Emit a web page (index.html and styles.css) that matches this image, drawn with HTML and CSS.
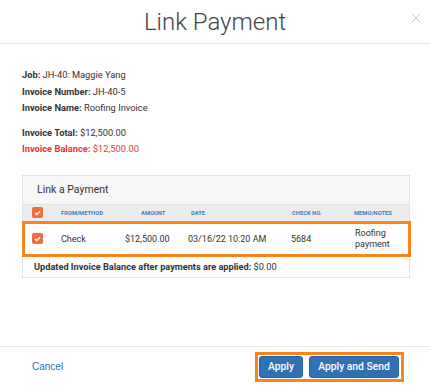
FILE: index.html
```html
<!DOCTYPE html>
<html>
<head>
<meta charset="utf-8">
<link rel="stylesheet" href="styles.css">
</head>
<body>
<div class="modal">
  <header class="modal-head">
    <span></span>
    <h1 class="title">Link Payment</h1>
    <span class="close">
      <svg width="10" height="10" viewBox="0 0 10 10"><path d="M0.5 0.5 L9.5 9.5 M9.5 0.5 L0.5 9.5" stroke="#c9c9c9" stroke-width="1" fill="none"/></svg>
    </span>
  </header>
  <main class="content">
    <div class="info">
      <p><b>Job:</b> JH-40: Maggie Yang</p>
      <p><b>Invoice Number:</b> JH-40-5</p>
      <p><b>Invoice Name:</b> Roofing Invoice</p>
    </div>
    <div class="info totals">
      <p><b>Invoice Total:</b> $12,500.00</p>
      <p class="red"><b>Invoice Balance:</b> $12,500.00</p>
    </div>
    <div class="table">
      <div class="table-title">Link a Payment</div>
      <div class="row col-head">
        <span class="cell cb-cell"><span class="cb"><svg width="7" height="6" viewBox="0 0 7 6"><path d="M1 3 L2.8 4.6 L6 1.2" stroke="#fff" stroke-width="1.4" fill="none"/></svg></span></span>
        <span class="cell">FROM/METHOD</span>
        <span class="cell h-amount">AMOUNT</span>
        <span class="cell h-date">DATE</span>
        <span class="cell h-check">CHECK NO.</span>
        <span class="cell">MEMO/NOTES</span>
      </div>
      <div class="row data-row">
        <span class="cell cb-cell"><span class="cb"><svg width="7" height="6" viewBox="0 0 7 6"><path d="M1 3 L2.8 4.6 L6 1.2" stroke="#fff" stroke-width="1.4" fill="none"/></svg></span></span>
        <span class="cell">Check</span>
        <span class="cell">$12,500.00</span>
        <span class="cell">03/16/22 10:20 AM</span>
        <span class="cell">5684</span>
        <span class="cell memo">Roofing<br>payment</span>
      </div>
      <div class="table-foot"><b>Updated Invoice Balance after payments are applied:</b> $0.00</div>
    </div>
  </main>
  <footer class="modal-foot">
    <a class="cancel">Cancel</a>
    <div class="btn-group">
      <button class="btn btn-apply">Apply</button>
      <button class="btn btn-send">Apply and Send</button>
    </div>
  </footer>
</div>
</body>
</html>
```

FILE: styles.css
```css
* { box-sizing: border-box; }
html, body { margin: 0; padding: 0; background: #fff; }
body { font-family: Roboto, "Liberation Sans", Arial, sans-serif; color: #333; }

.modal { width: 430px; height: 386px; display: flex; flex-direction: column; }

.modal-head {
  height: 44px;
  border-bottom: 1px solid #e6e6e6;
  display: grid;
  grid-template-columns: 1fr auto 1fr;
}
.title {
  margin: 0;
  padding-top: 2px;
  font-weight: 300;
  font-size: 24px;
  line-height: 41px;
  color: #444;
}
.close { justify-self: end; margin-top: 13px; margin-right: 9px; height: 10px; line-height: 0; }

.content { flex: 1; padding: 23px 20px 0 22px; }

.info p { margin: 0; font-size: 9.3px; line-height: 16.7px; }
.info b { font-weight: 700; }
.totals { margin-top: 7.5px; }
.red { color: #e5343a; }

.table { margin-top: 16.5px; border: 1px solid #e3e3e3; }
.table-title {
  height: 29px;
  background: #f7f7f7;
  border-bottom: 1px solid #e3e3e3;
  padding-left: 14px;
  font-size: 10.5px;
  line-height: 28px;
  color: #333;
}
.row { display: grid; align-items: center; }
.col-head {
  height: 16px;
  background: #ececec;
  grid-template-columns: 38px 64px 63px 103px 63px 1fr;
  font-size: 5.8px;
  font-weight: 700;
  color: #3d7cc6;
}
.cb-cell { padding-left: 9px; line-height: 0; }
.cb {
  display: inline-flex; align-items: center; justify-content: center;
  width: 11px; height: 11px; border-radius: 2px; background: #ef6e3b;
}
.h-amount { padding-left: 16px; }
.h-date { padding-left: 3px; }
.h-check { padding-left: 1px; }

.data-row {
  margin: 0 -2px 0 -1px;
  height: 36px;
  border: 3px solid #f7841f;
  grid-template-columns: 36px 64px 63px 103px 63px 1fr;
  font-size: 9px;
  color: #333;
}
.data-row .cb-cell { padding-left: 7px; }
.memo { padding-left: 1px; line-height: 10.7px; padding-top: 1px; }

.table-foot {
  height: 20px;
  padding-left: 11px;
  font-size: 9.2px;
  line-height: 20px;
  color: #333;
}

.modal-foot {
  height: 40px;
  border-top: 1px solid #e6e6e6;
  display: flex;
  align-items: center;
  justify-content: space-between;
  padding: 0 26px 0 32px;
}
.cancel { font-family: "Liberation Sans", Arial, sans-serif; font-size: 10px; color: #2f70b6; }
.btn-group {
  display: flex;
  gap: 6px;
  border: 3px solid #f7841f;
  padding: 1px 2px 1px 1px;
}
.btn {
  height: 22px;
  border: 1px solid #2a64a3;
  border-radius: 3px;
  background: #2f71b3;
  color: #fff;
  font-family: Roboto, "Liberation Sans", Arial, sans-serif;
  font-weight: 500;
  font-size: 10.3px;
  padding: 0;
}
.btn-apply { width: 44px; }
.btn-send { width: 90px; }
```
